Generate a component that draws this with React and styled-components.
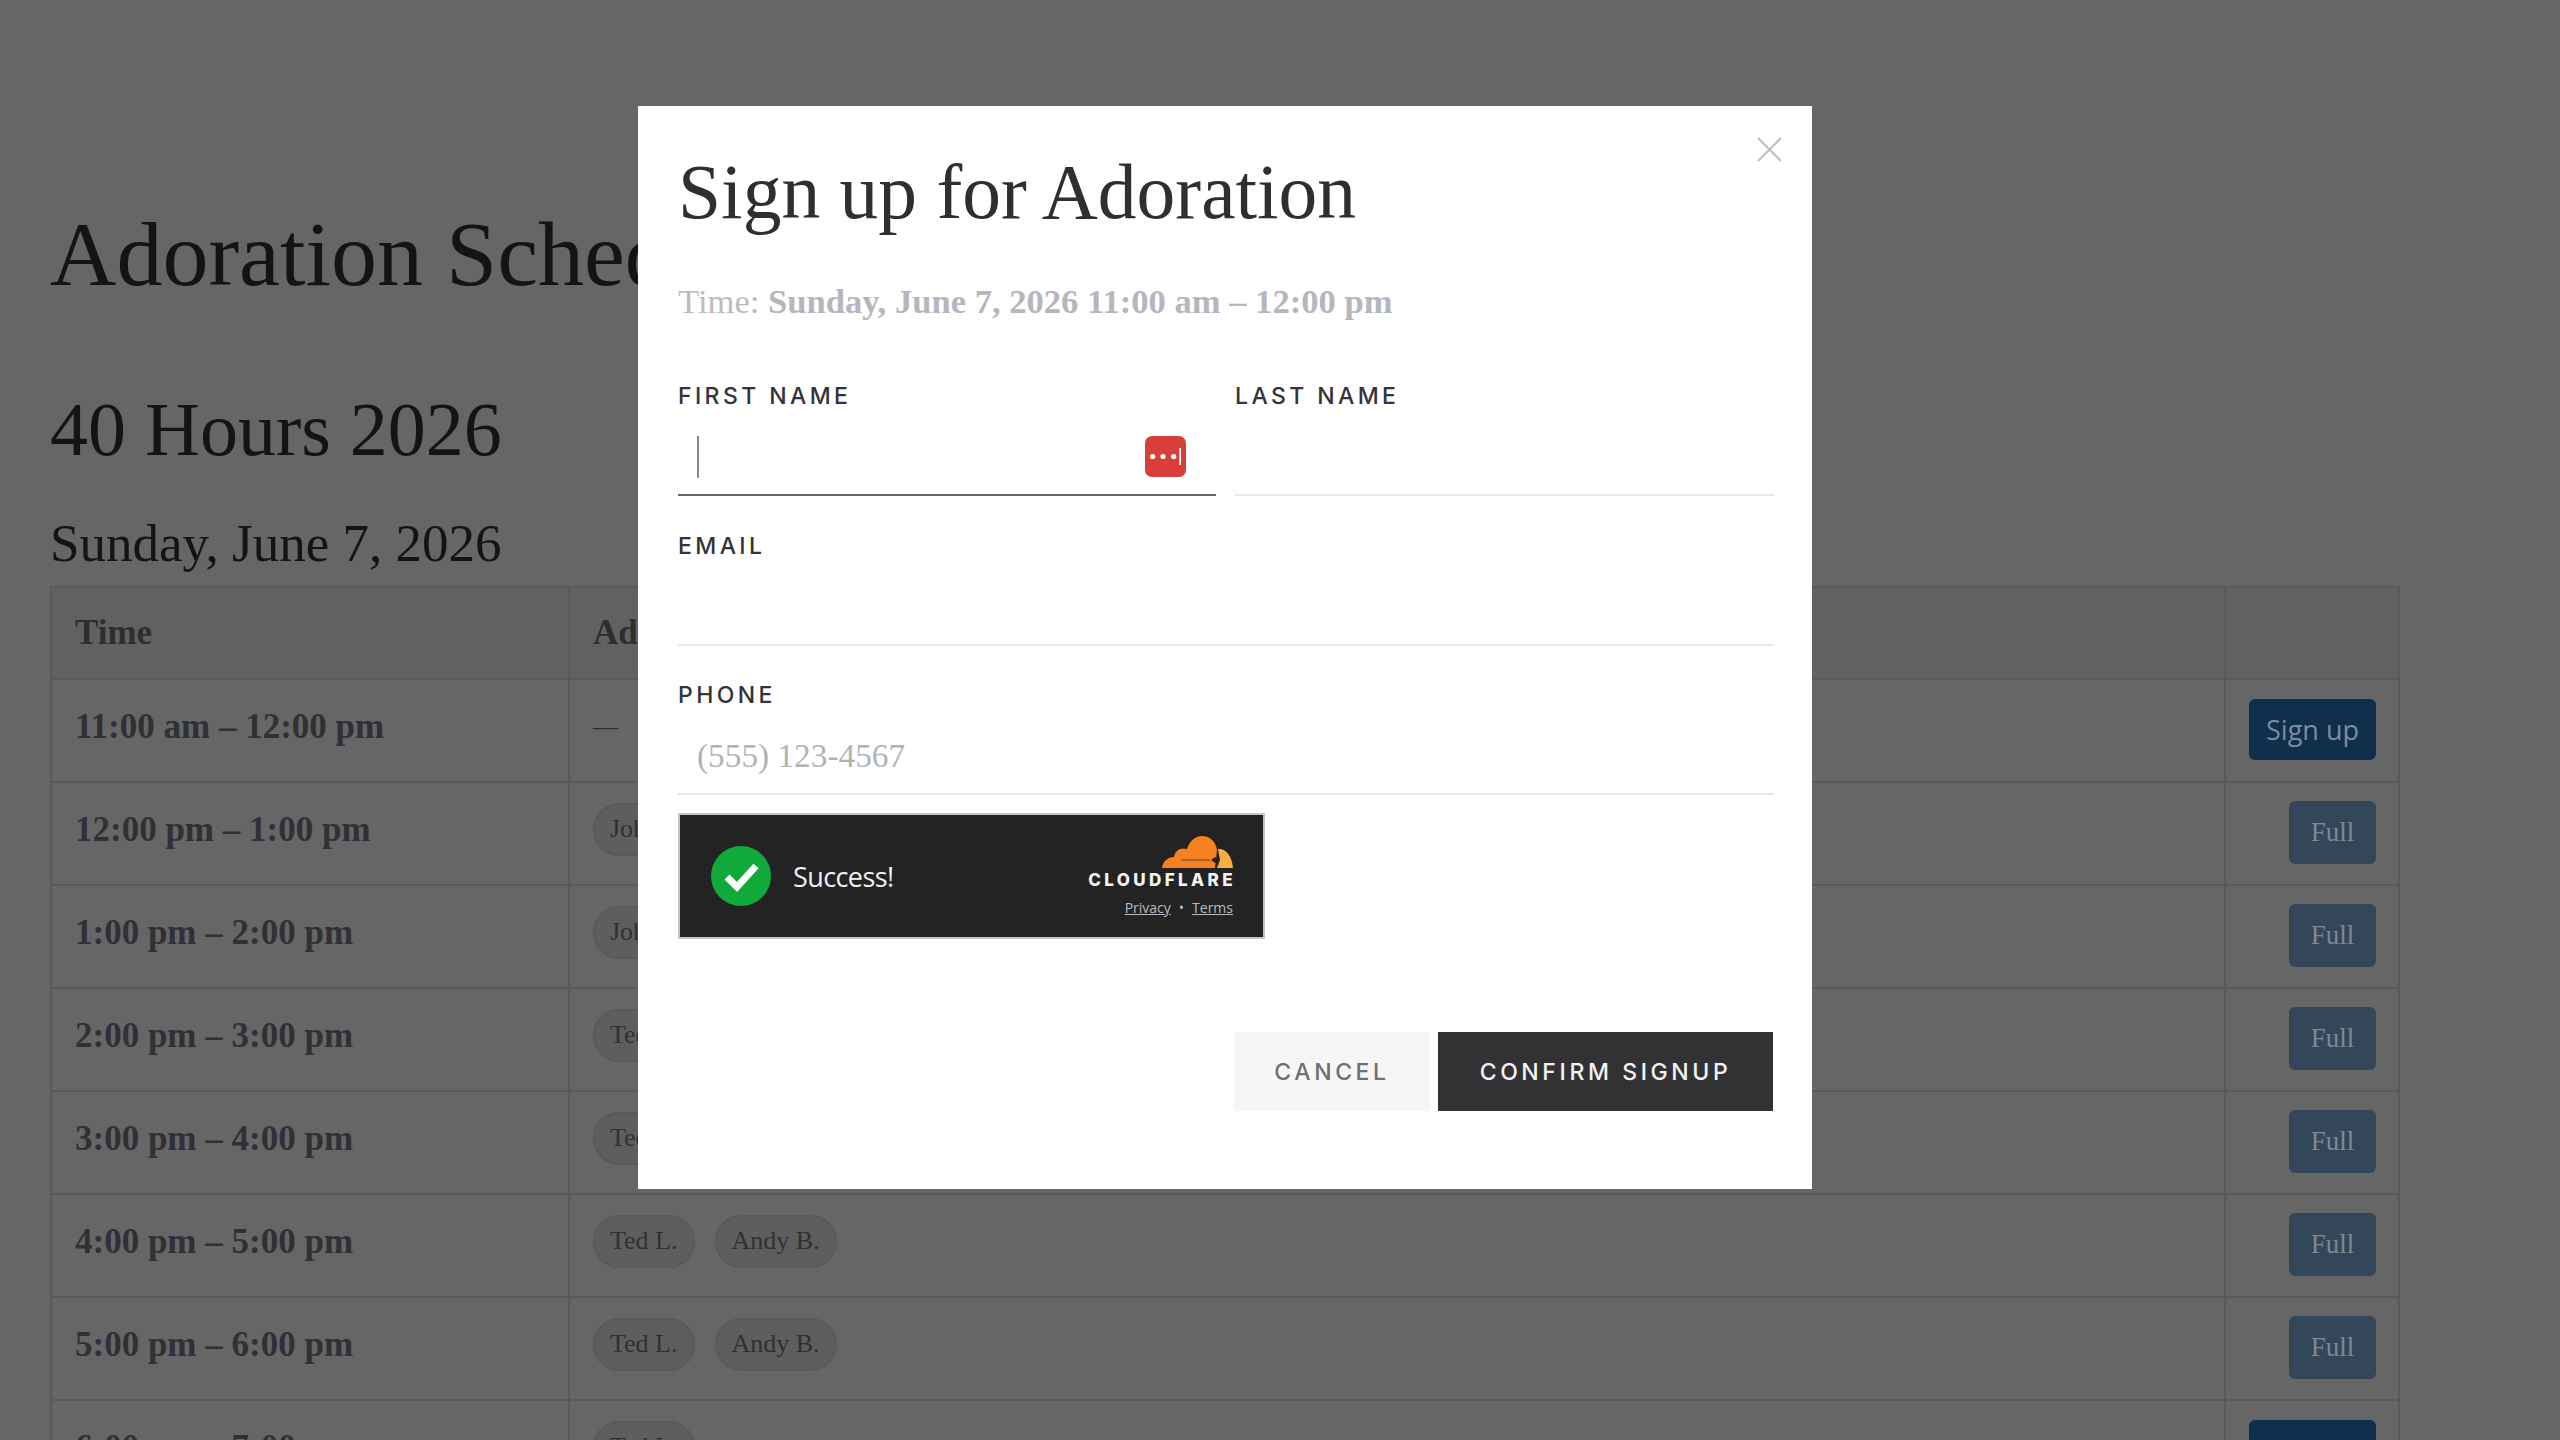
import React from "react";
import styled, { createGlobalStyle } from "styled-components";

const Global = createGlobalStyle`
  html, body { margin: 0; padding: 0; height: 100%; overflow: hidden; background: #666; }
  * { box-sizing: border-box; }
`;
const serif = `"Liberation Serif", "Times New Roman", serif`;
const sans = `Inter, "Open Sans", sans-serif`;

const Page = styled.main`
  height: 1440px; overflow: hidden; padding: 204px 160px 0 50px;
  font-family: ${serif}; color: #141416;
`;
const PageTitle = styled.h1`
  margin: 0; font-size: 92px; line-height: 100px; font-weight: 400; white-space: nowrap;
`;
const EventTitle = styled.h2`
  margin: 83px 0 0; font-size: 76px; line-height: 84px; font-weight: 400;
`;
const DayTitle = styled.h3`
  margin: 40px 0 0; font-size: 53px; line-height: 64px; font-weight: 400;
`;
const Table = styled.div`
  margin-top: 11px; display: grid; grid-template-columns: 516px 1656px 174px;
  border-top: 2px solid #5a5a5a; border-left: 2px solid #5a5a5a; border-right: 2px solid #5a5a5a;
`;
const HeadCell = styled.div`
  height: 92px; background: #606260; display: flex; align-items: center; padding: 0 23px;
  font-size: 35px; font-weight: 700; color: #2e2e30;
  border-bottom: 2px solid #5a5a5a;
  & + & { border-left: 2px solid #5a5a5a; }
`;
const Cell = styled.div`
  height: 103px; display: flex; align-items: center; gap: 20px;
  padding: ${p => (p.$end ? "0 22px 2px" : "0 23px 7px")};
  border-bottom: 2px solid #5a5a5a; border-left: ${p => (p.$first ? "none" : "2px solid #5a5a5a")};
  justify-content: ${p => (p.$end ? "flex-end" : "flex-start")};
`;
const TimeText = styled.span`
  font-size: 35px; font-weight: 700; color: #303036; white-space: nowrap;
`;
const Dash = styled.span`font-size: 25px; color: #2e2e30;`;
const Chip = styled.span`
  height: 53px; padding: 0 15px; margin-bottom: 2px; border-radius: 26px; display: inline-flex; align-items: center;
  background: #5e5e5e; border: 2px solid #5a5a5a; color: #303034; font-size: 26px; white-space: nowrap;
`;
const RowButton = styled.div`
  height: ${p => (p.$full ? "63px" : "61px")}; border-radius: 6px; white-space: nowrap;
  width: ${p => (p.$full ? "87px" : "127px")};
  display: flex; align-items: center; justify-content: center;
  background: ${p => (p.$full ? "#34475a" : "#0f2f4d")};
  color: ${p => (p.$full ? "#7c8894" : "#7d8ca0")};
  font-family: ${p => (p.$full ? serif : `"Open Sans", sans-serif`)};
  font-size: 27px;
  font-weight: 400;
`;

const Modal = styled.section`
  position: fixed; left: 638px; top: 106px; width: 1174px; height: 1083px;
  background: #fff; padding: 40px 39px 0 40px; color: #333;
`;
const Close = styled.button`
  position: absolute; top: 31px; right: 30px; width: 25px; height: 25px; padding: 0;
  border: 0; background: none; display: block;
`;
const ModalTitle = styled.h2`
  margin: 0; font-family: ${serif}; font-size: 77.5px; line-height: 92px; font-weight: 400; color: #2f2f33;
`;
const TimeLine = styled.p`
  margin: 41px 0 0; font-family: ${serif}; font-size: 34.6px; line-height: 44px; color: #bcbcc0;
  strong { color: #b5b6be; font-weight: 700; }
`;
const FormGrid = styled.div`
  margin-top: 60px; display: grid; grid-template-columns: 538px 539px; column-gap: 19px; row-gap: 36.5px;
`;
const Field = styled.div`
  grid-column: ${p => (p.$wide ? "1 / -1" : "auto")};
  display: flex; flex-direction: column;
`;
const Label = styled.label`
  font-family: ${sans}; font-size: 23px; line-height: 26px; font-weight: 500; letter-spacing: 3.4px; color: #333338;
`;
const InputBox = styled.div`
  margin-top: 16px; height: 71px; padding: 0 20px 6px 19px; display: flex; align-items: center; justify-content: space-between;
  border-bottom: 2px solid ${p => (p.$focus ? "#666" : "#e8e8e8")};
  font-family: ${serif}; font-size: 33.3px; color: #b2b2b6;
`;
const Caret = styled.span`display: block; width: 2px; height: 42px; background: #8a8a8a;`;
const PassIcon = styled.svg`display: block; width: 41px; height: 41px; margin-right: 10px;`;

const Widget = styled.div`
  margin-top: 18px; width: 587px; height: 126px; background: #232323; border: 2px solid #c4c4c4;
  display: flex; align-items: center; justify-content: space-between; padding: 0 30px 0 31px;
`;
const WidgetLeft = styled.div`display: flex; align-items: center; gap: 22px;`;
const SuccessText = styled.span`
  font-family: "Open Sans", sans-serif; font-size: 27px; color: #f0f0f0; letter-spacing: -0.6px;
`;
const Brand = styled.div`display: flex; flex-direction: column; align-items: flex-end;`;
const BrandName = styled.span`
  font-family: ${sans}; font-size: 17px; line-height: 20px; font-weight: 800; letter-spacing: 3.4px; color: #f4f4f4;
  margin-top: 2px; margin-right: -3px;
`;
const BrandLinks = styled.div`
  margin-top: 9px; display: flex; gap: 8px; font-family: "Open Sans", sans-serif; font-size: 14px; line-height: 18px; color: #b8bcc2;
  a { color: inherit; text-decoration: underline; }
`;
const Actions = styled.div`
  margin-top: 93px; display: flex; justify-content: flex-end; gap: 8px;
`;
const ActionButton = styled.button`
  height: 79px; padding: 0; border: 0; width: ${p => (p.$primary ? "335px" : "196px")};
  background: ${p => (p.$primary ? "#323234" : "#f6f6f6")};
  color: ${p => (p.$primary ? "#f2f2f2" : "#6f6f74")};
  font-family: ${sans}; font-size: 23px; font-weight: 500; letter-spacing: 3.6px;
`;

const rows = [
  ["12:00 pm – 1:00 pm", ["John"]],
  ["1:00 pm – 2:00 pm", ["John"]],
  ["2:00 pm – 3:00 pm", ["Ted L."]],
  ["3:00 pm – 4:00 pm", ["Ted L."]],
  ["4:00 pm – 5:00 pm", ["Ted L.", "Andy B."]],
  ["5:00 pm – 6:00 pm", ["Ted L.", "Andy B."]],
];

function Cloud() {
  return (
    <svg width="71" height="32" viewBox="0 0 71 32" style={{ display: "block" }}>
      <path d="M0 32C1 25 6 21 12 21C13 14 19 11 25 13C28 4 34 0 40 0C48 0 54 6 55 14L53 32Z" fill="#f6821f" />
      <path d="M56 13C63 12 70 19 71 32H55L58 24Z" fill="#fbad41" />
      <path d="M19 24H48" stroke="#a8622a" strokeWidth="2" />
      <path d="M49 24L53 21L57 24L53 27Z" fill="#232323" />
    </svg>
  );
}

export default function App() {
  return (
    <>
      <Global />
      <Page>
        <PageTitle>Adoration Schedule</PageTitle>
        <EventTitle>40 Hours 2026</EventTitle>
        <DayTitle>Sunday, June 7, 2026</DayTitle>
        <Table>
          <HeadCell>Time</HeadCell>
          <HeadCell>Adorers</HeadCell>
          <HeadCell />
          <Cell $first><TimeText>11:00 am – 12:00 pm</TimeText></Cell>
          <Cell><Dash>—</Dash></Cell>
          <Cell $end><RowButton>Sign up</RowButton></Cell>
          {rows.map(([time, people]) => (
            <React.Fragment key={time}>
              <Cell $first><TimeText>{time}</TimeText></Cell>
              <Cell>{people.map(name => <Chip key={name}>{name}</Chip>)}</Cell>
              <Cell $end><RowButton $full>Full</RowButton></Cell>
            </React.Fragment>
          ))}
          <Cell $first><TimeText>6:00 pm – 7:00 pm</TimeText></Cell>
          <Cell><Chip>Ted L.</Chip></Cell>
          <Cell $end><RowButton>Sign up</RowButton></Cell>
        </Table>
      </Page>
      <Modal>
        <Close aria-label="Close">
          <svg width="25" height="25" viewBox="0 0 25 25"><path d="M1 1L24 24M24 1L1 24" stroke="#bdbdbd" strokeWidth="2" /></svg>
        </Close>
        <ModalTitle>Sign up for Adoration</ModalTitle>
        <TimeLine>Time: <strong>Sunday, June 7, 2026 11:00 am – 12:00 pm</strong></TimeLine>
        <FormGrid>
          <Field>
            <Label>FIRST NAME</Label>
            <InputBox $focus>
              <Caret />
              <PassIcon viewBox="0 0 41 41">
                <rect width="41" height="41" rx="7" fill="#d93f3a" />
                <circle cx="7.7" cy="20.5" r="2.6" fill="#fff" />
                <circle cx="18" cy="20.5" r="2.6" fill="#fff" />
                <circle cx="28.7" cy="20.5" r="2.6" fill="#fff" />
                <rect x="34.4" y="12" width="1.6" height="17" fill="#fff" />
              </PassIcon>
            </InputBox>
          </Field>
          <Field>
            <Label>LAST NAME</Label>
            <InputBox />
          </Field>
          <Field $wide>
            <Label>EMAIL</Label>
            <InputBox />
          </Field>
          <Field $wide>
            <Label>PHONE</Label>
            <InputBox>(555) 123-4567</InputBox>
          </Field>
        </FormGrid>
        <Widget>
          <WidgetLeft>
            <svg width="60" height="60" viewBox="0 0 60 60" style={{ display: "block" }}>
              <circle cx="30" cy="30" r="30" fill="#10a93a" />
              <path d="M16 31L26 41L45 20" fill="none" stroke="#fff" strokeWidth="7" />
            </svg>
            <SuccessText>Success!</SuccessText>
          </WidgetLeft>
          <Brand>
            <Cloud />
            <BrandName>CLOUDFLARE</BrandName>
            <BrandLinks><a>Privacy</a><span>•</span><a>Terms</a></BrandLinks>
          </Brand>
        </Widget>
        <Actions>
          <ActionButton>CANCEL</ActionButton>
          <ActionButton $primary>CONFIRM SIGNUP</ActionButton>
        </Actions>
      </Modal>
    </>
  );
}
